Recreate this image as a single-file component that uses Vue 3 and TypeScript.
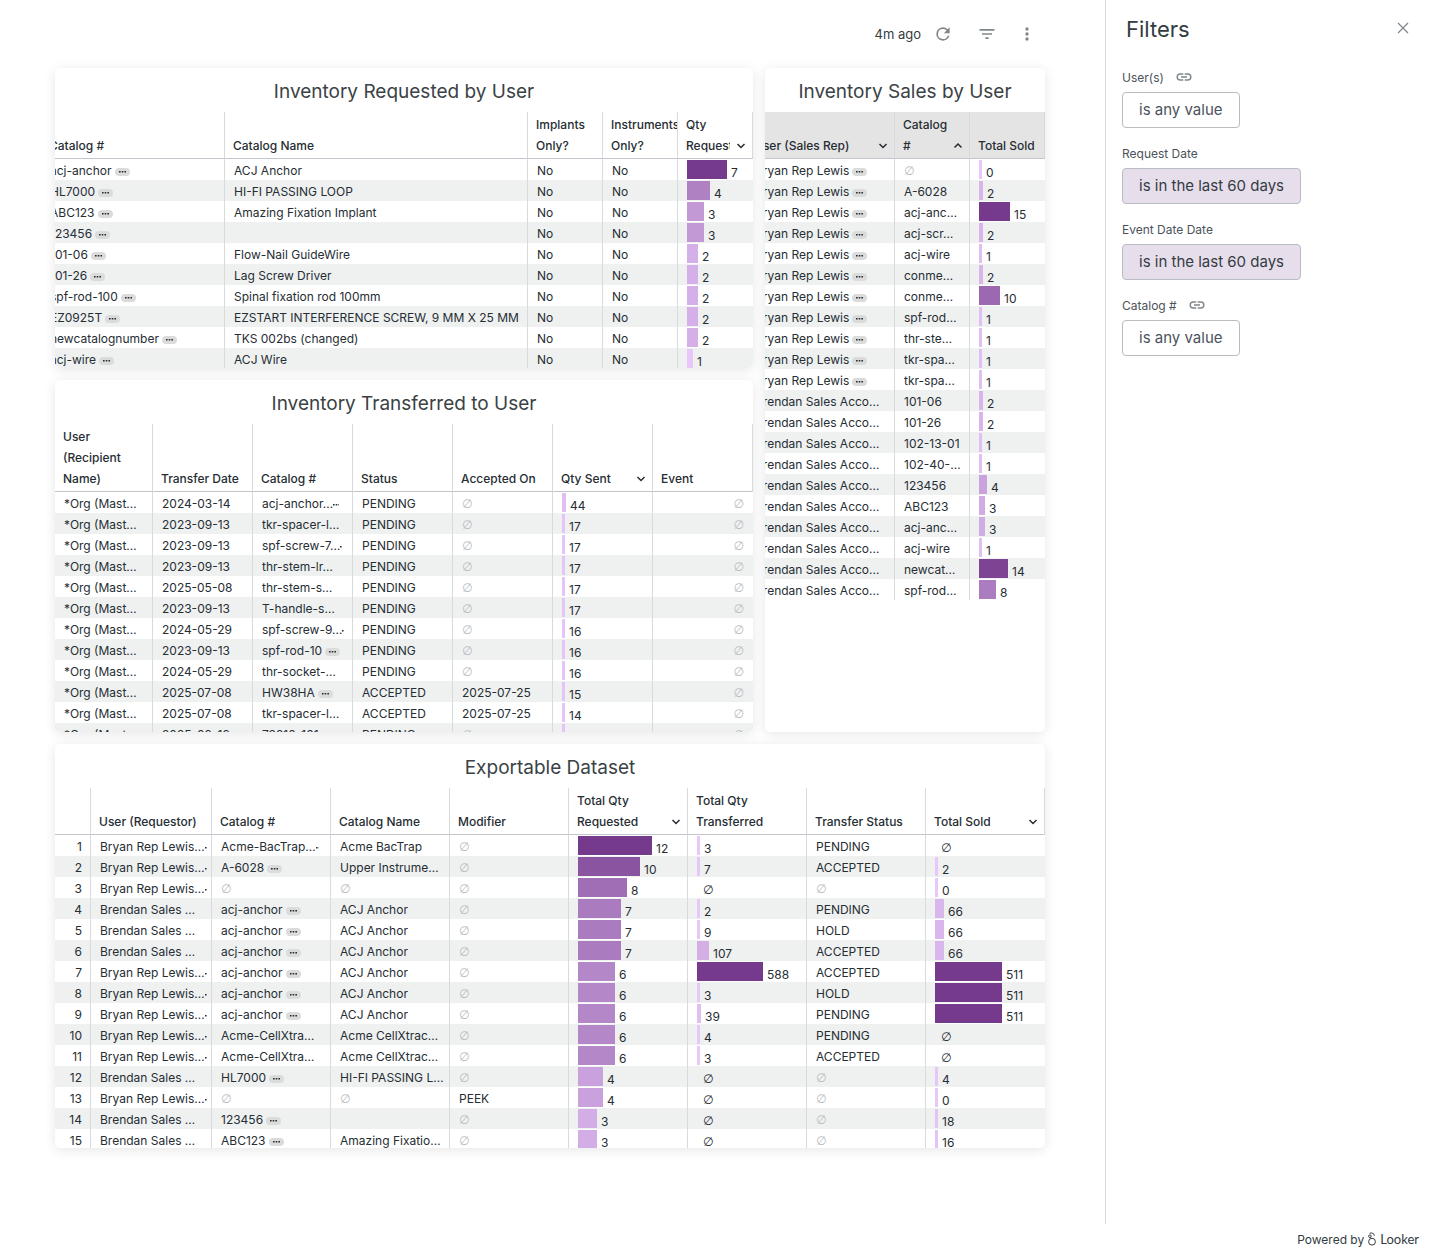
<script setup lang="ts">
interface TextCell {
  text: string
  menu?: boolean
  dots?: number
}
type Cell = TextCell | string | number | null

interface Column {
  label: string
  width?: number
  sort?: 'up' | 'down'
  align?: 'right'
  bar?: { min: number; max: number; size: number }
}
interface Tile {
  id: string
  title: string
  shift: number
  shaded?: boolean
  columns: Column[]
  rows: Cell[][]
}

const menu = (text: string): TextCell => ({ text, menu: true })
const cut = (text: string, dots: number): TextCell => ({ text, dots })

const org = '*Org (Mast…'
const bryan = menu('Bryan Rep Lewis')
const bryanCut = cut('Bryan Rep Lewis…', 2)
const brendan = 'Brendan Sales Acco…'
const brendanShort = 'Brendan Sales …'
const anchor = menu('acj-anchor')

const tiles: Tile[] = [
  {
    id: 'requested',
    title: 'Inventory Requested by User',
    shift: 14,
    columns: [
      { label: 'Catalog #', width: 184 },
      { label: 'Catalog Name' },
      { label: 'Implants\nOnly?', width: 75 },
      { label: 'Instruments\nOnly?', width: 75 },
      { label: 'Qty\nRequested', width: 75, sort: 'down', bar: { min: 1, max: 7, size: 40 } },
    ],
    rows: [
      [anchor, 'ACJ Anchor', 'No', 'No', 7],
      [menu('HL7000'), 'HI-FI PASSING LOOP', 'No', 'No', 4],
      [menu('ABC123'), 'Amazing Fixation Implant', 'No', 'No', 3],
      [menu('123456'), '', 'No', 'No', 3],
      [menu('101-06'), 'Flow-Nail GuideWire', 'No', 'No', 2],
      [menu('101-26'), 'Lag Screw Driver', 'No', 'No', 2],
      [menu('spf-rod-100'), 'Spinal fixation rod 100mm', 'No', 'No', 2],
      [menu('EZ0925T'), 'EZSTART INTERFERENCE SCREW, 9 MM X 25 MM', 'No', 'No', 2],
      [menu('newcatalognumber'), 'TKS 002bs (changed)', 'No', 'No', 2],
      [menu('acj-wire'), 'ACJ Wire', 'No', 'No', 1],
    ],
  },
  {
    id: 'sales',
    title: 'Inventory Sales by User',
    shift: 19,
    shaded: true,
    columns: [
      { label: 'User (Sales Rep)', sort: 'down' },
      { label: 'Catalog\n#', width: 75, sort: 'up' },
      { label: 'Total Sold', width: 75, bar: { min: 0, max: 15, size: 31 } },
    ],
    rows: [
      [bryan, null, 0],
      [bryan, 'A-6028', 2],
      [bryan, 'acj-anc…', 15],
      [bryan, 'acj-scr…', 2],
      [bryan, 'acj-wire', 1],
      [bryan, 'conme…', 2],
      [bryan, 'conme…', 10],
      [bryan, 'spf-rod…', 1],
      [bryan, 'thr-ste…', 1],
      [bryan, 'tkr-spa…', 1],
      [bryan, 'tkr-spa…', 1],
      [brendan, '101-06', 2],
      [brendan, '101-26', 2],
      [brendan, '102-13-01', 1],
      [brendan, '102-40-…', 1],
      [brendan, '123456', 4],
      [brendan, 'ABC123', 3],
      [brendan, 'acj-anc…', 3],
      [brendan, 'acj-wire', 1],
      [brendan, 'newcat…', 14],
      [brendan, 'spf-rod…', 8],
    ],
  },
  {
    id: 'transferred',
    title: 'Inventory Transferred to User',
    shift: 0,
    columns: [
      { label: 'User\n(Recipient\nName)' },
      { label: 'Transfer Date', width: 100 },
      { label: 'Catalog #', width: 100 },
      { label: 'Status', width: 100 },
      { label: 'Accepted On', width: 100 },
      { label: 'Qty Sent', width: 100, sort: 'down', bar: { min: 1, max: 588, size: 58 } },
      { label: 'Event', width: 100, align: 'right' },
    ],
    rows: [
      [org, '2024-03-14', cut('acj-anchor…', 6), 'PENDING', null, 44, null],
      [org, '2023-09-13', 'tkr-spacer-l…', 'PENDING', null, 17, null],
      [org, '2023-09-13', cut('spf-screw-7…', 2), 'PENDING', null, 17, null],
      [org, '2023-09-13', 'thr-stem-lr…', 'PENDING', null, 17, null],
      [org, '2025-05-08', 'thr-stem-s…', 'PENDING', null, 17, null],
      [org, '2023-09-13', 'T-handle-s…', 'PENDING', null, 17, null],
      [org, '2024-05-29', cut('spf-screw-9…', 2), 'PENDING', null, 16, null],
      [org, '2023-09-13', menu('spf-rod-10'), 'PENDING', null, 16, null],
      [org, '2024-05-29', 'thr-socket-…', 'PENDING', null, 16, null],
      [org, '2025-07-08', menu('HW38HA'), 'ACCEPTED', '2025-07-25', 15, null],
      [org, '2025-07-08', 'tkr-spacer-l…', 'ACCEPTED', '2025-07-25', 14, null],
      [org, '2025-09-19', '73210-101', 'PENDING', null, 14, null],
    ],
  },
  {
    id: 'dataset',
    title: 'Exportable Dataset',
    shift: 0,
    columns: [
      { label: '', width: 36, align: 'right' },
      { label: 'User (Requestor)' },
      { label: 'Catalog #', width: 119 },
      { label: 'Catalog Name', width: 119 },
      { label: 'Modifier', width: 119 },
      { label: 'Total Qty\nRequested', width: 119, sort: 'down', bar: { min: 1, max: 12, size: 74 } },
      { label: 'Total Qty\nTransferred', width: 119, bar: { min: 2, max: 588, size: 66 } },
      { label: 'Transfer Status', width: 119 },
      { label: 'Total Sold', width: 119, sort: 'down', bar: { min: 0, max: 511, size: 67 } },
    ],
    rows: [
      ['1', bryanCut, cut('Acme-BacTrap…', 3), 'Acme BacTrap', null, 12, 3, 'PENDING', null],
      ['2', bryanCut, menu('A-6028'), 'Upper Instrume…', null, 10, 7, 'ACCEPTED', 2],
      ['3', bryanCut, null, null, null, 8, null, null, 0],
      ['4', brendanShort, anchor, 'ACJ Anchor', null, 7, 2, 'PENDING', 66],
      ['5', brendanShort, anchor, 'ACJ Anchor', null, 7, 9, 'HOLD', 66],
      ['6', brendanShort, anchor, 'ACJ Anchor', null, 7, 107, 'ACCEPTED', 66],
      ['7', bryanCut, anchor, 'ACJ Anchor', null, 6, 588, 'ACCEPTED', 511],
      ['8', bryanCut, anchor, 'ACJ Anchor', null, 6, 3, 'HOLD', 511],
      ['9', bryanCut, anchor, 'ACJ Anchor', null, 6, 39, 'PENDING', 511],
      ['10', bryanCut, 'Acme-CellXtra…', 'Acme CellXtrac…', null, 6, 4, 'PENDING', null],
      ['11', bryanCut, 'Acme-CellXtra…', 'Acme CellXtrac…', null, 6, 3, 'ACCEPTED', null],
      ['12', brendanShort, menu('HL7000'), 'HI-FI PASSING L…', null, 4, null, null, 4],
      ['13', bryanCut, null, null, 'PEEK', 4, null, null, 0],
      ['14', brendanShort, menu('123456'), '', null, 3, null, null, 18],
      ['15', brendanShort, menu('ABC123'), 'Amazing Fixatio…', null, 3, null, null, 16],
    ],
  },
]

const filters = [
  { id: 'users', label: 'User(s)', linked: true, value: 'is any value', set: false },
  { id: 'request', label: 'Request Date', linked: false, value: 'is in the last 60 days', set: true },
  { id: 'event', label: 'Event Date Date', linked: false, value: 'is in the last 60 days', set: true },
  { id: 'catalog', label: 'Catalog #', linked: true, value: 'is any value', set: false },
]

const light = [232, 200, 250]
const dark = [118, 58, 140]

function barStyle(value: number, bar: NonNullable<Column['bar']>) {
  const t = (value - bar.min) / (bar.max - bar.min)
  const rgb = light.map((c, i) => Math.round(c + (dark[i] - c) * t))
  const width = Math.max(3, Math.round((value / bar.max) * bar.size))
  return { width: `${width}px`, background: `rgb(${rgb.join(',')})` }
}

function asText(cell: Cell): TextCell {
  return typeof cell === 'object' && cell !== null ? cell : { text: String(cell) }
}
</script>

<template>
  <div class="page">
    <div class="workspace">
      <main class="board">
        <div class="toolbar">
          <div class="refresh">
            <span class="age">4m ago</span>
            <button type="button" class="icon" aria-label="Reload">
              <svg width="20" height="20" viewBox="0 0 24 24"><path d="M17.65 6.35A7.96 7.96 0 0 0 12 4a8 8 0 1 0 7.73 10h-2.08A6 6 0 1 1 12 6c1.66 0 3.14.69 4.22 1.78L13 11h7V4z" /></svg>
            </button>
          </div>
          <button type="button" class="icon" aria-label="Hide filters">
            <svg width="20" height="20" viewBox="0 0 24 24"><path d="M10 18h4v-2h-4zM3 6v2h18V6zm3 7h12v-2H6z" /></svg>
          </button>
          <button type="button" class="icon" aria-label="Dashboard actions">
            <svg width="20" height="20" viewBox="0 0 24 24"><path d="M12 8a2 2 0 1 0 0-4 2 2 0 0 0 0 4m0 2a2 2 0 1 0 0 4 2 2 0 0 0 0-4m0 6a2 2 0 1 0 0 4 2 2 0 0 0 0-4" /></svg>
          </button>
        </div>

        <div class="tiles">
          <section v-for="tile in tiles" :key="tile.id" class="tile" :class="tile.id">
            <h2>{{ tile.title }}</h2>
            <table
              :class="{ shaded: tile.shaded }"
              :style="{ width: `calc(100% + ${tile.shift}px)`, marginLeft: `${-tile.shift}px` }"
            >
              <colgroup>
                <col v-for="(c, i) in tile.columns" :key="i" :style="c.width ? { width: `${c.width}px` } : undefined" />
              </colgroup>
              <thead>
                <tr>
                  <th v-for="(c, i) in tile.columns" :key="i" scope="col">
                    <div class="head">
                      <span class="name">{{ c.label }}</span>
                      <svg v-if="c.sort" class="chevron" width="10" height="21" viewBox="0 0 10 21">
                        <path :d="c.sort === 'down' ? 'M1.5 9 5 12.5 8.5 9' : 'M1.5 12.5 5 9l3.5 3.5'" />
                      </svg>
                    </div>
                  </th>
                </tr>
              </thead>
              <tbody>
                <tr v-for="(row, r) in tile.rows" :key="r">
                  <td v-for="(c, i) in tile.columns" :key="i" :class="c.align">
                    <div v-if="c.bar" class="measure">
                      <template v-if="typeof row[i] === 'number'">
                        <span class="bar" :style="barStyle(row[i] as number, c.bar)"></span>
                        <span class="number">{{ row[i] }}</span>
                      </template>
                      <span v-else class="empty dark">∅</span>
                    </div>
                    <div v-else-if="row[i] === null" class="cell"><span class="empty">∅</span></div>
                    <div v-else class="cell">
                      <span>{{ asText(row[i]).text }}</span>
                      <button v-if="asText(row[i]).menu" type="button" class="more" aria-label="More">
                        <svg width="7" height="2" viewBox="0 0 7 2"><path d="M0 0h1.6v1.6H0zm2.7 0h1.6v1.6H2.7zm2.7 0H7v1.6H5.4z" /></svg>
                      </button>
                      <svg v-else-if="asText(row[i]).dots" class="dots" :width="asText(row[i]).dots" height="2">
                        <path d="M0 0h1.6v1.6H0zm2.7 0h1.6v1.6H2.7zm2.7 0H7v1.6H5.4z" />
                      </svg>
                    </div>
                  </td>
                </tr>
              </tbody>
            </table>
          </section>
        </div>
      </main>

      <aside class="filters">
        <header>
          <h1>Filters</h1>
          <button type="button" class="icon" aria-label="Close filters">
            <svg width="16" height="16" viewBox="0 0 16 16"><path class="line" d="m3 3 10 10M13 3 3 13" /></svg>
          </button>
        </header>
        <div v-for="f in filters" :key="f.id" class="filter">
          <label :for="f.id">
            {{ f.label }}
            <svg v-if="f.linked" width="18" height="18" viewBox="0 0 24 24"><path d="M3.9 12A3.1 3.1 0 0 1 7 8.9h4V7H7a5 5 0 0 0 0 10h4v-1.9H7A3.1 3.1 0 0 1 3.9 12M8 13h8v-2H8zm9-6h-4v1.9h4a3.1 3.1 0 0 1 0 6.2h-4V17h4a5 5 0 0 0 0-10" /></svg>
          </label>
          <button :id="f.id" type="button" class="value" :class="{ set: f.set }">{{ f.value }}</button>
        </div>
      </aside>
    </div>

    <footer>
      <span>Powered by</span>
      <svg width="10" height="14" viewBox="0 0 10 14">
        <circle cx="5" cy="9.7" r="3.4" />
        <circle cx="2.9" cy="4.2" r="1.3" />
        <path d="M3.5 5.4 4.300 6.500M2.600 1.200C5.200.4 7.400 1.700 7.300 3.800" />
      </svg>
      <span class="looker">Looker</span>
    </footer>
  </div>
</template>

<style>
body {
  margin: 0;
  background: #fff;
}
</style>

<style scoped>
.page {
  display: flex;
  flex-direction: column;
  min-height: 100vh;
  font-family: Inter, 'Noto Sans', sans-serif;
  font-size: 12px;
  color: #262d33;
}
button {
  font: inherit;
  color: inherit;
  border: 0;
  padding: 0;
  background: none;
}
svg {
  display: block;
  fill: currentColor;
}
.workspace {
  flex: 1;
  display: flex;
}
.board {
  flex: 1;
  min-width: 0;
  padding: 0 60px 76px 55px;
}
.toolbar {
  display: flex;
  justify-content: flex-end;
  align-items: center;
  height: 68px;
  padding-right: 8px;
  gap: 20px;
}
.refresh {
  display: flex;
  align-items: center;
  gap: 12px;
  margin-right: 4px;
}
.age {
  font-size: 13px;
  color: #343c42;
}
.icon {
  color: #80868b;
}
.tiles {
  display: grid;
  grid-template-columns: 698fr 280fr;
  grid-template-rows: 300px 352px 404px;
  gap: 12px;
}
.tile {
  min-width: 0;
  overflow: hidden;
  border-radius: 5px;
  background: #fff;
  box-shadow: 0 2px 12px rgba(0, 0, 0, 0.1);
}
.sales {
  grid-column: 2;
  grid-row: 1 / 3;
}
.dataset {
  grid-column: 1 / 3;
}
h2 {
  margin: 0;
  height: 44px;
  line-height: 48px;
  font-size: 19px;
  font-weight: 400;
  text-align: center;
  color: #3a4245;
}
table {
  table-layout: fixed;
  border-collapse: separate;
  border-spacing: 0;
}
.shaded thead {
  background: #e4e4e4;
}
th {
  padding: 2px 0 2px 8px;
  vertical-align: bottom;
  text-align: left;
  font-weight: 500;
  line-height: 21px;
  border-right: 1px solid #d8dadc;
  border-bottom: 1px solid #c1c6cc;
}
.head {
  display: flex;
  align-items: flex-end;
  min-height: 21px;
}
.name {
  flex: 1;
  min-width: 0;
  overflow: hidden;
  white-space: pre;
}
.chevron {
  flex: none;
  margin: 0 6px;
  fill: none;
  stroke: currentColor;
  stroke-width: 1.5;
}
td {
  height: 21px;
  padding: 0 0 0 9px;
  border-right: 1px solid #d8dadc;
}
td:last-child {
  border-right-color: transparent;
}
tbody tr:nth-child(even) {
  background: #eff1f1;
}
.cell {
  display: flex;
  align-items: center;
  height: 21px;
  padding-top: 2px;
  box-sizing: border-box;
  overflow: hidden;
  white-space: nowrap;
}
.right .cell {
  justify-content: flex-end;
  padding-right: 8px;
}
.empty {
  font-family: 'DejaVu Sans', sans-serif;
  font-size: 12px;
  line-height: 14px;
  color: #b9bcbf;
}
.empty.dark {
  padding: 5px 0 0 6px;
  color: #262d33;
}
.more {
  flex: none;
  display: grid;
  place-items: center;
  width: 15px;
  height: 8px;
  margin: 2px 0 0 3px;
  border-radius: 4px;
  background: #dbdbdb;
}
.dots {
  margin-top: 3px;
}
.measure {
  display: flex;
  align-items: center;
  height: 21px;
}
.bar {
  flex: none;
  height: 19px;
}
.number {
  padding: 5px 0 0 4px;
}
.filters {
  flex: 0 0 327px;
  box-sizing: border-box;
  border-left: 1px solid #d8dadc;
  padding: 0 21px 0 16px;
}
.filters header {
  display: flex;
  align-items: center;
  justify-content: space-between;
  height: 56px;
  padding-left: 4px;
}
h1 {
  margin: 0;
  padding-top: 2px;
  font-size: 22px;
  font-weight: 400;
  color: #343c42;
}
.line {
  fill: none;
  stroke: currentColor;
  stroke-width: 1.2;
}
.filter {
  padding-top: 11px;
  height: 65px;
}
label {
  display: flex;
  align-items: center;
  gap: 11px;
  height: 20px;
  margin-bottom: 5px;
  color: #4c535b;
}
label svg {
  color: #80868b;
}
.value {
  height: 36px;
  padding: 0 16px 2px;
  border: 1px solid #b9bcc0;
  border-radius: 4px;
  font-size: 15px;
  color: #4c535b;
}
.value.set {
  background: #e7deec;
  color: #343c42;
}
footer {
  display: flex;
  align-items: center;
  justify-content: flex-end;
  gap: 3px;
  height: 30px;
  padding-right: 13px;
  color: #343c42;
}
footer svg {
  fill: none;
  stroke: currentColor;
}
.looker {
  font-family: Lato, sans-serif;
  font-size: 13px;
}
</style>
